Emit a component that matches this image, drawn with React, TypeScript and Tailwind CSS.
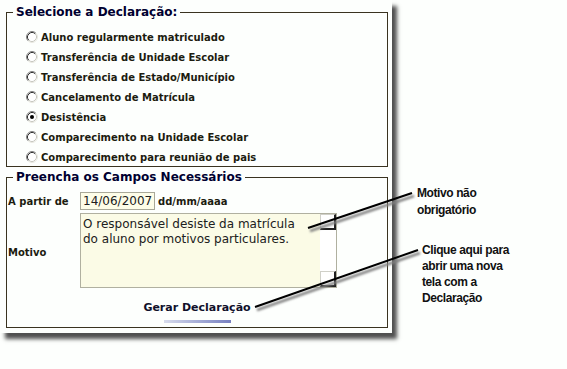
import React from "react";

const options = [
  { label: "Aluno regularmente matriculado", checked: false },
  { label: "Transferência de Unidade Escolar", checked: false },
  { label: "Transferência de Estado/Município", checked: false },
  { label: "Cancelamento de Matrícula", checked: false },
  { label: "Desistência", checked: true },
  { label: "Comparecimento na Unidade Escolar", checked: false },
  { label: "Comparecimento para reunião de pais", checked: false },
];

function Radio({ checked }: { checked: boolean }) {
  return (
    <svg width="12" height="12" viewBox="0 0 12 12" className="shrink-0">
      <circle cx="6" cy="6" r="5" fill="#ffffff" />
      <path d="M2.11 9.89 A5.5 5.5 0 0 1 9.89 2.11" fill="none" stroke="#808080" strokeWidth="1" />
      <path d="M9.89 2.11 A5.5 5.5 0 0 1 2.11 9.89" fill="none" stroke="#e8e8e0" strokeWidth="1" />
      <path d="M2.82 9.18 A4.5 4.5 0 0 1 9.18 2.82" fill="none" stroke="#303030" strokeWidth="1" />
      <path d="M9.18 2.82 A4.5 4.5 0 0 1 2.82 9.18" fill="none" stroke="#c8c8c0" strokeWidth="1" />
      {checked && <circle cx="6" cy="6" r="2" fill="#000000" />}
    </svg>
  );
}

export default function App() {
  return (
    <div className="relative w-[567px] h-[369px] bg-[#fdfffd] font-['DejaVu_Sans',Verdana,sans-serif] overflow-hidden">
      {/* painel */}
      <div className="w-[392px] h-[333px] bg-[#fdfffd] pt-[5px] shadow-[5px_6px_4px_#505050]">
        <fieldset className="ml-[6px] w-[382px] border border-[#3a3320] pt-[9px]">
          <legend className="ml-[6px] px-[3px] text-[12px] leading-[14px] font-bold text-[#000030]">
            Selecione a Declaração:
          </legend>
          <div className="flex flex-col gap-[2px]">
            {options.map((o) => (
              <label key={o.label} className="flex items-center h-[18px] pl-[19px] gap-[3px] text-[10px] font-bold text-[#1c1c10]">
                <Radio checked={o.checked} />
                <span>{o.label}</span>
              </label>
            ))}
          </div>
        </fieldset>

        <fieldset className="mt-[3px] ml-[6px] w-[382px] border border-[#3a3320] pt-[8px] pb-[4px]">
          <legend className="ml-[6px] px-[3px] text-[12px] leading-[14px] font-bold text-[#000030]">
            Preencha os Campos Necessários
          </legend>
          <div className="grid grid-cols-[73px_1fr] gap-y-[3px] text-[#1c1c10]">
            <div className="flex items-center pl-[1px] text-[10px] font-bold">A partir de</div>
            <div className="flex items-center gap-[3px]">
              <div className="h-[18px] w-[75px] border border-[#a8a898] bg-[#fdfde8] pl-[2px] text-[12px] leading-[16px] text-[#202020]">
                14/06/2007
              </div>
              <span className="text-[10px] font-bold">dd/mm/aaaa</span>
            </div>
            <div className="flex items-center pl-[1px] pt-[4px] text-[10px] font-bold">Motivo</div>
            <div className="flex h-[75px] w-[257px] border border-[#b0b0a0]">
              <div className="flex-1 bg-[#fbfbe6] pl-[2px] pt-[3px] text-[12px] leading-[15px] text-[#202020]">
                O responsável desiste da matrícula
                <br />
                do aluno por motivos particulares.
              </div>
              <div className="flex w-[16px] flex-col justify-between bg-white">
                <div className="h-[16px] border-t border-l border-[#d0d0c8] border-r-2 border-b-2 border-r-[#202020] border-b-[#202020]" />
                <div className="h-[16px] border-t border-l border-[#d0d0c8] border-r-2 border-b-2 border-r-[#202020] border-b-[#202020]" />
              </div>
            </div>
          </div>
          <div className="mt-[13px] flex flex-col items-center">
            <span className="text-[11px] leading-[14px] font-bold text-[#10102a]">Gerar Declaração</span>
            <div className="mt-[5px] h-[3px] w-[67px] bg-gradient-to-r from-[#d8dcec] to-[#7880c0]" />
          </div>
        </fieldset>
      </div>

      {/* setas de anotação */}
      <svg className="absolute left-0 top-0" width="567" height="369">
        <defs>
          <filter id="blur" x="-10%" y="-50%" width="120%" height="200%">
            <feGaussianBlur stdDeviation="1.2" />
          </filter>
        </defs>
        <g stroke="#808080" strokeWidth="2.5" filter="url(#blur)">
          <line x1="310" y1="231" x2="414" y2="196" />
          <line x1="257" y1="310" x2="420" y2="253" />
        </g>
        <g stroke="#000000" strokeWidth="2">
          <line x1="308" y1="228" x2="412" y2="193" />
          <line x1="255" y1="307" x2="418" y2="250" />
        </g>
      </svg>

      <div className="absolute left-[417px] top-[185px] font-['Liberation_Sans',Arial,sans-serif] text-[12px] leading-[17px] font-bold tracking-[-0.4px] text-[#111111]">
        Motivo não
        <br />
        obrigatório
      </div>
      <div className="absolute left-[422px] top-[242px] font-['Liberation_Sans',Arial,sans-serif] text-[12px] leading-[16px] font-bold tracking-[-0.4px] text-[#111111]">
        Clique aqui para
        <br />
        abrir uma nova
        <br />
        tela com a
        <br />
        Declaração
      </div>
    </div>
  );
}
